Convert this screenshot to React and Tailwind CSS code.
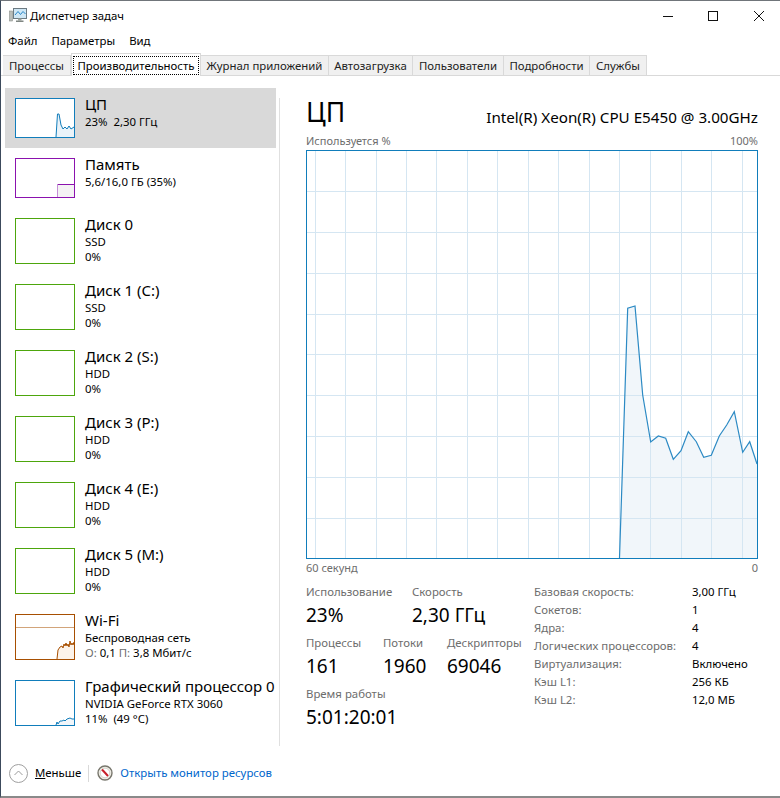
import React from "react";

const tabs = [
  { title: "Процессы", w: "w-[68px]" },
  { title: "Производительность", w: "w-[130px]", active: true },
  { title: "Журнал приложений", w: "w-[128px]" },
  { title: "Автозагрузка", w: "w-[84px]" },
  { title: "Пользователи", w: "w-[91px]" },
  { title: "Подробности", w: "w-[86px]" },
  { title: "Службы", w: "w-[57px]" },
];

const BLUE = "#117dbb";
const PURPLE = "#8b12ae";
const ORANGE = "#a74f01";

// миниатюры графиков в левой колонке
const CpuThumb = () => (
  <svg width="58" height="38" className="block">
    <path d="M40 38 L41.5 15 L43 15 L45 26 L47 30 L49 28 L51 30 L53 27 L55 30 L58 28 L58 38 Z" fill="#eaf3f9" stroke="none" />
    <path d="M40 38 L41.5 15 L43 15 L45 26 L47 30 L49 28 L51 30 L53 27 L55 30 L58 28" fill="none" stroke={BLUE} strokeWidth="1" />
  </svg>
);

const MemThumb = () => (
  <svg width="58" height="38" className="block">
    <rect x="41" y="25" width="17" height="13" fill="#f4f2f4" />
    <line x1="41" y1="25.5" x2="58" y2="25.5" stroke={PURPLE} strokeWidth="1" />
    <line x1="41.5" y1="25" x2="41.5" y2="38" stroke="#c48fd6" strokeWidth="1" />
  </svg>
);

const WifiThumb = () => (
  <svg width="58" height="44" className="block">
    <line x1="0" y1="12.5" x2="58" y2="12.5" stroke="#d2a47a" strokeWidth="1" />
    <path d="M41 44 L42 35 L44 32 L46 31 L47 33 L48 29 L49 31 L50 28 L51 31 L52 29 L53 32 L54 26 L55 30 L56 28 L57 30 L58 27 L58 44 Z" fill="#fcf3ea" stroke="none" />
    <path d="M41 44 L42 35 L44 32 L46 31 L47 33 L48 29 L49 31 L50 28 L51 31 L52 29 L53 32 L54 26 L55 30 L56 28 L57 30 L58 27" fill="none" stroke={ORANGE} strokeWidth="1" />
  </svg>
);

const GpuThumb = () => (
  <svg width="58" height="44" className="block">
    <path d="M40 44 L41 41 L42 43 L44 40 L46 40 L48 39 L49 40 L51 38 L54 37 L56 38 L58 38 L58 44 Z" fill="#f1f6fa" stroke="none" />
    <path d="M40 44 L41 41 L42 43 L44 40 L46 40 L48 39 L49 40 L51 38 L54 37 L56 38 L58 38" fill="none" stroke={BLUE} strokeWidth="1" />
  </svg>
);

const sideItems = [
  { name: "ЦП", lines: ["23%  2,30 ГГц"], color: "border-[#117dbb]", h: "h-10", thumb: <CpuThumb />, active: true, rowH: "h-[60px]" },
  { name: "Память", lines: ["5,6/16,0 ГБ (35%)"], color: "border-[#8b12ae]", h: "h-10", thumb: <MemThumb />, rowH: "h-[60px]" },
  { name: "Диск 0", lines: ["SSD", "0%"], color: "border-[#4da60c]", h: "h-[46px]", rowH: "h-[66px]" },
  { name: "Диск 1 (C:)", lines: ["SSD", "0%"], color: "border-[#4da60c]", h: "h-[46px]", rowH: "h-[66px]" },
  { name: "Диск 2 (S:)", lines: ["HDD", "0%"], color: "border-[#4da60c]", h: "h-[46px]", rowH: "h-[66px]" },
  { name: "Диск 3 (P:)", lines: ["HDD", "0%"], color: "border-[#4da60c]", h: "h-[46px]", rowH: "h-[66px]" },
  { name: "Диск 4 (E:)", lines: ["HDD", "0%"], color: "border-[#4da60c]", h: "h-[46px]", rowH: "h-[66px]" },
  { name: "Диск 5 (M:)", lines: ["HDD", "0%"], color: "border-[#4da60c]", h: "h-[46px]", rowH: "h-[66px]" },
  {
    name: "Wi-Fi",
    lines: [
      "Беспроводная сеть",
      <>
        <span className="text-[#6d6d6d]">О:</span> 0,1 <span className="text-[#6d6d6d]">П:</span> 3,8 Мбит/с
      </>,
    ],
    color: "border-[#a74f01]",
    h: "h-[46px]",
    thumb: <WifiThumb />,
    rowH: "h-[66px]",
  },
  { name: "Графический процессор 0", lines: ["NVIDIA GeForce RTX 3060", "11%  (49 °C)"], color: "border-[#117dbb]", h: "h-[46px]", thumb: <GpuThumb />, rowH: "h-[66px]" },
];

const vLines = [8.5, 38.5, 69.5, 99.5, 129.5, 160.5, 190.5, 221.5, 251.5, 282.5, 312.5, 343.5, 374.5, 404.5, 435.5];
const hLines = [40.5, 81.5, 122.5, 163.5, 203.5, 244.5, 285.5, 326.5, 367.5];

const chartPoints = [
  [312.5, 407], [320.7, 157.3], [328, 155], [335.7, 244], [343.7, 291], [351.3, 285], [358.7, 287.3],
  [366.3, 308.3], [374, 299.7], [381.3, 280.7], [389.3, 290.7], [396.7, 306.3], [404.3, 304.3],
  [412.3, 285], [419.7, 274], [427.3, 260.7], [435.7, 301.3], [442.7, 290.7], [450, 313],
];
const linePath = chartPoints.map((p, i) => `${i === 0 ? "M" : "L"}${p[0]} ${p[1]}`).join(" ");

const CpuChart = () => (
  <div className="h-[409px] w-[452px] border border-[#117dbb]">
    <svg width="450" height="407" className="block">
      <path d={`${linePath} L450 407 Z`} fill="#f1f6fa" />
      {vLines.map((x) => (
        <line key={x} x1={x} y1="0" x2={x} y2="407" stroke="#d5e6f2" strokeWidth="1" />
      ))}
      {hLines.map((y) => (
        <line key={y} x1="0" y1={y} x2="450" y2={y} stroke="#d5e6f2" strokeWidth="1" />
      ))}
      <path d={linePath} fill="none" stroke="#2c8ac4" strokeWidth="1.2" />
    </svg>
  </div>
);

const Stat = ({ label, value, className }) => (
  <div className={className}>
    <div className="text-[11.4px] leading-[16px] text-[#6d6d6d]">{label}</div>
    <div className="mt-[3px] text-[19px] leading-[24px] text-black">{value}</div>
  </div>
);

const specs = [
  ["Базовая скорость:", "3,00 ГГц"],
  ["Сокетов:", "1"],
  ["Ядра:", "4"],
  ["Логических процессоров:", "4"],
  ["Виртуализация:", "Включено"],
  ["Кэш L1:", "256 КБ"],
  ["Кэш L2:", "12,0 МБ"],
];

const AppIcon = () => (
  <svg width="18" height="18" viewBox="0 0 18 18" className="block">
    <rect x="0.5" y="5" width="3" height="10" fill="#b9bdb9" stroke="#8a8f8a" strokeWidth="0.6" />
    <rect x="4.5" y="2.5" width="13" height="10" fill="#cfe7f5" stroke="#6c7a82" strokeWidth="1" />
    <path d="M6 9 L9 5.5 L11.5 8.5 L14 5.5 L16.5 8" fill="none" stroke="#2b88c8" strokeWidth="1" />
    <rect x="9" y="12.5" width="3.5" height="2" fill="#9aa19c" />
    <rect x="7" y="14.5" width="7.5" height="1.5" fill="#7f8682" />
  </svg>
);

const ResmonIcon = () => (
  <svg width="16" height="16" viewBox="0 0 16 16" className="block">
    <circle cx="8" cy="8" r="7" fill="#f1efe8" stroke="#77766c" strokeWidth="1.4" />
    <circle cx="8" cy="8" r="4.8" fill="#fff" stroke="#bdbcb2" strokeWidth="0.6" />
    <path d="M5 4.5 L11 11" stroke="#c8202a" strokeWidth="2" />
  </svg>
);

const App = () => {
  return (
    <div
      className="flex h-[798px] w-[780px] flex-col overflow-hidden border-t border-l border-b-2 border-t-[#70757a] border-l-[#3c4a5c] border-b-[#8a8a8a] bg-white text-[11.4px] text-black"
      style={{ fontFamily: '"Noto Sans", sans-serif' }}
    >
      {/* заголовок */}
      <div className="flex h-[29px] flex-none items-center">
        <div className="ml-[8px] flex items-center gap-[3px]">
          <AppIcon />
          <span className="mt-[1px]">Диспетчер задач</span>
        </div>
        <div className="mr-[16px] ml-auto flex items-center">
          <svg width="10" height="10" viewBox="0 0 10 10" className="block">
            <path d="M0 5.5 H10" stroke="#111" strokeWidth="1" />
          </svg>
          <svg width="10" height="10" viewBox="0 0 10 10" className="ml-[35px] block">
            <rect x="0.5" y="0.5" width="9" height="9" fill="none" stroke="#111" strokeWidth="1" />
          </svg>
          <svg width="10" height="10" viewBox="0 0 10 10" className="ml-[36px] block">
            <path d="M0 0 L10 10 M10 0 L0 10" stroke="#111" strokeWidth="1" />
          </svg>
        </div>
      </div>

      {/* меню */}
      <div className="flex h-[21px] flex-none items-center gap-[14px] pl-[7px]">
        <span>Файл</span>
        <span>Параметры</span>
        <span>Вид</span>
      </div>

      {/* вкладки */}
      <div className="flex h-[25px] flex-none items-end border-b border-[#d9d9d9] pl-[2px]">
        {tabs.map((t) =>
          t.active ? (
            <div key={t.title} className={`z-10 -mb-px flex h-[23px] items-center border border-b-0 border-[#d9d9d9] bg-white px-[1px] ${t.w}`}>
              <span className="flex-1 border border-dotted border-black text-center leading-[17px]">{t.title}</span>
            </div>
          ) : (
            <div key={t.title} className={`flex h-[20px] items-center justify-center border-t border-r border-[#d9d9d9] bg-[#f0f0f0] text-[#222] ${t.w}`}>
              {t.title}
            </div>
          )
        )}
      </div>

      {/* основная часть */}
      <div className="flex min-h-0 flex-1">
        <div className="flex w-[278px] flex-none flex-col pt-[12px] pl-[4px]">
          {sideItems.map((item) => (
            <div
              key={item.name}
              className={`flex w-[271px] gap-[10px] pt-[10px] pl-[10px] ${item.rowH} ${item.active ? "bg-[#d9d9d9]" : ""}`}
            >
              <div className={`w-[60px] flex-none border bg-white ${item.color} ${item.h}`}>{item.thumb}</div>
              <div className="-mt-[3px]">
                <div className="text-[15px] leading-[19px] whitespace-nowrap">{item.name}</div>
                {item.lines.map((line, i) => (
                  <div key={i} className="text-[11.4px] leading-[15px] whitespace-pre">
                    {line}
                  </div>
                ))}
              </div>
            </div>
          ))}
        </div>

        <div className="mt-[22px] flex flex-1 border-l border-[#e0e0e0]">
          <div className="-mt-[22px] flex flex-1 flex-col pl-[26px]">
            <div className="flex h-[52px] w-[452px] items-end justify-between">
              <span className="text-[26.6px] leading-[32px]">ЦП</span>
              <span className="text-[15.2px] leading-[22px]">Intel(R) Xeon(R) CPU E5450 @ 3.00GHz</span>
            </div>
            <div className="flex h-[22px] w-[452px] items-center justify-between pt-[4px] text-[11px] text-[#6d6d6d]">
              <span>Используется %</span>
              <span>100%</span>
            </div>
            <CpuChart />
            <div className="flex h-[18px] w-[452px] items-center justify-between text-[11px] text-[#6d6d6d]">
              <span>60 секунд</span>
              <span>0</span>
            </div>

            <div className="mt-[7px] flex">
              <div className="w-[228px]">
                <div className="flex">
                  <Stat label="Использование" value="23%" className="w-[106px]" />
                  <Stat label="Скорость" value="2,30 ГГц" />
                </div>
                <div className="mt-[8px] flex">
                  <Stat label="Процессы" value="161" className="w-[77px]" />
                  <Stat label="Потоки" value="1960" className="w-[64px]" />
                  <Stat label="Дескрипторы" value="69046" />
                </div>
                <Stat label="Время работы" value="5:01:20:01" className="mt-[8px]" />
              </div>
              <div className="-mt-px grid grid-cols-[158px_auto] content-start leading-[18px]">
                {specs.map(([k, v]) => (
                  <React.Fragment key={k}>
                    <span className="text-[#6d6d6d]">{k}</span>
                    <span>{v}</span>
                  </React.Fragment>
                ))}
              </div>
            </div>
          </div>
        </div>
      </div>

      {/* низ окна */}
      <div className="flex h-[50px] flex-none items-center pt-[4px] pl-[8px]">
        <div className="flex h-[19px] w-[19px] items-center justify-center rounded-full border border-[#a0a0a0]">
          <svg width="9" height="6" viewBox="0 0 9 6">
            <path d="M0.5 5 L4.5 1 L8.5 5" fill="none" stroke="#9a9a9a" strokeWidth="1" />
          </svg>
        </div>
        <span className="ml-[7px]">
          <span className="underline">М</span>еньше
        </span>
        <div className="mr-[8px] ml-[7px] h-[17px] w-px bg-[#d9d9d9]" />
        <ResmonIcon />
        <span className="ml-[7px] text-[#0066cc]">Открыть монитор ресурсов</span>
      </div>
    </div>
  );
};

export default App;
